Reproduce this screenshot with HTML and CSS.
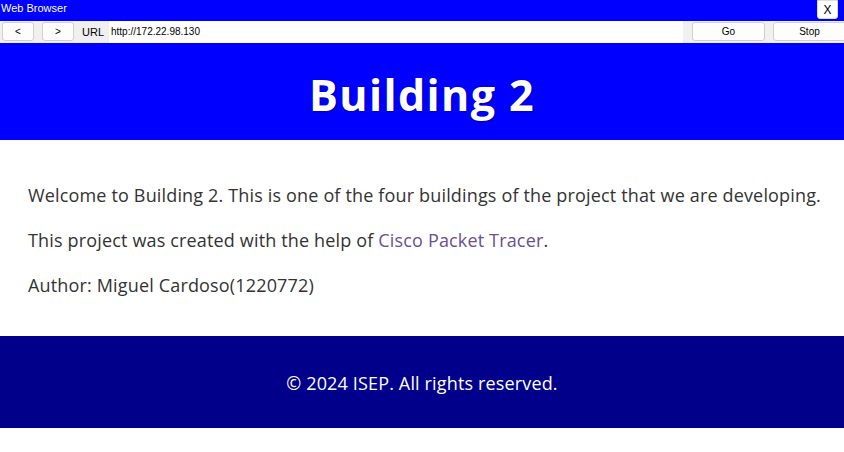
FILE: index.html
```html
<!DOCTYPE html>
<html>
<head>
<meta charset="utf-8">
<link rel="stylesheet" href="styles.css">
</head>
<body>
<div class="titlebar">
  <span class="title">Web Browser</span>
  <button class="close">X</button>
</div>
<div class="toolbar">
  <button class="btn nav">&lt;</button>
  <button class="btn nav">&gt;</button>
  <span class="url-label">URL</span>
  <div class="url">http://172.22.98.130</div>
  <button class="btn go">Go</button>
  <button class="btn stop">Stop</button>
</div>
<div class="page">
  <header class="hero"><h1>Building 2</h1></header>
  <main class="content">
    <p>Welcome to Building 2. This is one of the four buildings of the project that we are developing.</p>
    <p>This project was created with the help of <a href="#">Cisco Packet Tracer</a>.</p>
    <p>Author: Miguel Cardoso(1220772)</p>
  </main>
  <footer class="foot"><p>© 2024 ISEP. All rights reserved.</p></footer>
</div>
</body>
</html>
```
FILE: styles.css
```css
* { box-sizing: border-box; }
html, body { margin: 0; padding: 0; background: #fff; }
body { font-family: "Liberation Sans", Arial, sans-serif; }
.titlebar {
  height: 21px;
  background: #0000ff;
  display: flex;
  align-items: flex-start;
  justify-content: space-between;
}
.title { color: #fff; font-size: 11px; line-height: 16px; padding-left: 1px; }
.close {
  width: 21px; height: 19px; margin-right: 6px;
  background: #fff; border: 1px solid #ddd; border-radius: 0 0 3px 3px;
  font: 12px "Liberation Sans", Arial, sans-serif; color: #000; padding: 0;
}
.toolbar {
  height: 23px;
  background: #f0f0f0;
  display: flex;
  align-items: center;
  padding: 0 0 1px 2px;
  border-bottom: 1px solid #0000ff;
}
.btn {
  height: 19px;
  background: #fdfdfd;
  border: 1px solid #d0d0d0;
  border-radius: 3px;
  font: 10px "Liberation Sans", Arial, sans-serif;
  color: #000;
  padding: 0;
}
.nav { width: 32px; margin-right: 8px; }
.url-label { font-size: 11px; width: 27px; text-align: left; margin-right: 0; }
.url {
  flex: 1; height: 22px; background: #fff; font-size: 10px; line-height: 22px;
  padding-left: 2px; margin-right: 9px; align-self: flex-start;
}
.go { width: 73px; margin-right: 8px; }
.stop { width: 73px; margin-right: -2px; }
.page { font-family: "Open Sans", "Noto Sans", sans-serif; color: #333; }
.hero {
  background: #0000ff;
  height: 96px;
  padding-top: 5px;
  display: flex;
  align-items: center;
  justify-content: center;
}
.hero h1 {
  margin: 0; color: #fff; font-size: 43px; font-weight: 700; letter-spacing: 1.4px;
  text-shadow: 1px 1px 2px rgba(0,0,0,0.35);
}
.content { padding: 24px 12px 19px 28px; font-size: 18px; line-height: 27px; letter-spacing: 0.16px; }
.content p { margin: 18px 0; }
.content a { color: #6b4f8e; text-decoration: none; }
.foot {
  background: #00008b; height: 92px; padding-top: 2px; display: flex; align-items: center; justify-content: center;
  color: #fff; font-size: 18px; letter-spacing: 0.15px;
}
.foot p { margin: 0; }
```
